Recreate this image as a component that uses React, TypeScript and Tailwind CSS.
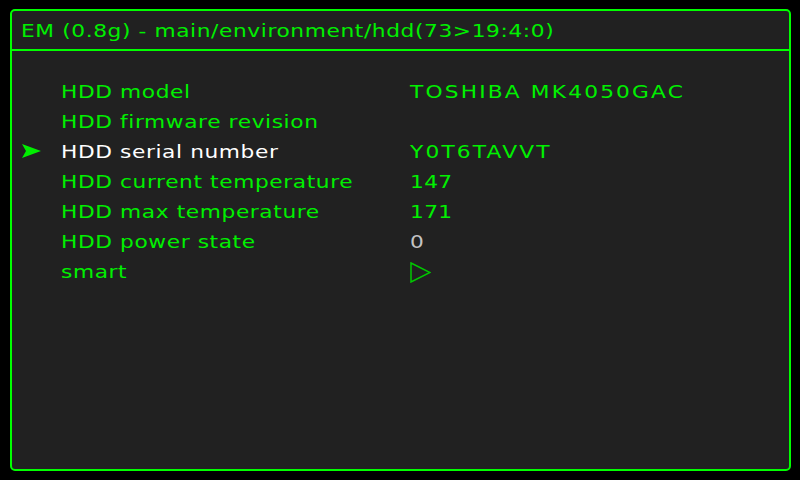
import React from "react";

const rows: { label: string; value?: string; kind?: "gray" | "tri" | "caps"; selected?: boolean }[] = [
  { label: "HDD model", value: "TOSHIBA MK4050GAC", kind: "caps" },
  { label: "HDD firmware revision", value: "" },
  { label: "HDD serial number", value: "Y0T6TAVVT", kind: "caps", selected: true },
  { label: "HDD current temperature", value: "147" },
  { label: "HDD max temperature", value: "171" },
  { label: "HDD power state", value: "0", kind: "gray" },
  { label: "smart", kind: "tri" },
];

export default function App() {
  return (
    <div
      className="w-[800px] h-[480px] bg-black pt-[9px] pl-[10px]"
      style={{ fontFamily: '"DejaVu Sans", sans-serif' }}
    >
      <div className="w-[781px] h-[462px] border-2 border-[#00ff00] rounded-[5px] bg-[#212121] flex flex-col overflow-hidden">
        <div className="h-[40px] border-b-2 border-[#00ff00] flex items-center pl-[9px] text-[18px] text-[#00f000]">
          <span className="inline-block origin-left scale-x-[1.206] tracking-[0.5px] whitespace-nowrap">
            EM (0.8g) - main/environment/hdd(73&gt;19:4:0)
          </span>
        </div>
        <div className="pt-[25px] flex flex-col">
          {rows.map((r) => (
            <div key={r.label} className="h-[30px] flex items-center text-[18px]">
              <div className="w-[49px] pl-[10px] flex items-center">
                {r.selected && (
                  <svg width="19" height="14" viewBox="0 0 19 14">
                    <polygon points="0,0 19,7 0,14 4,7" fill="#00ee00" />
                  </svg>
                )}
              </div>
              <div className={`w-[349px] ${r.selected ? "text-white" : "text-[#00f000]"}`}>
                <span className="inline-block origin-left scale-x-[1.206] tracking-[0.5px] whitespace-nowrap">
                  {r.label}
                </span>
              </div>
              <div className={r.kind === "gray" ? "text-[#c4c4c4]" : "text-[#00f000]"}>
                {r.kind === "tri" ? (
                  <svg width="21" height="21" viewBox="0 0 21 21" className="mt-[2px]">
                    <polygon points="1,1 20,10.5 1,20" fill="none" stroke="#00c800" strokeWidth="1.5" />
                  </svg>
                ) : (
                  <span
                    className={`inline-block origin-left scale-x-[1.206] whitespace-nowrap ${
                      r.kind === "caps" ? "tracking-[1.8px]" : "tracking-[0.3px]"
                    }`}
                  >
                    {r.value}
                  </span>
                )}
              </div>
            </div>
          ))}
        </div>
      </div>
    </div>
  );
}
